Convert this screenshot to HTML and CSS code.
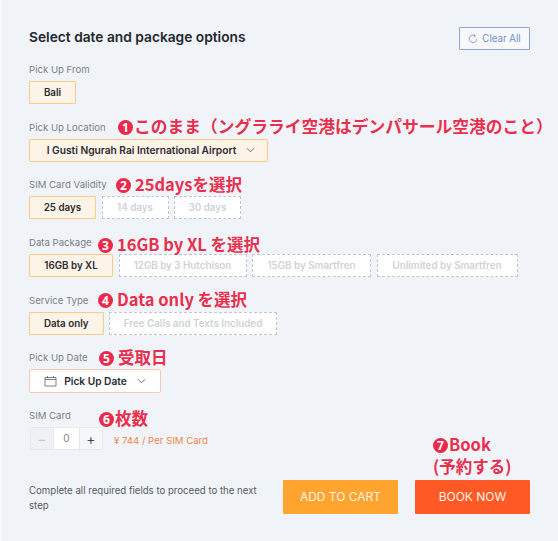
FILE: index.html
```html
<!DOCTYPE html>
<html lang="en">
<head>
<meta charset="utf-8">
<title>Select date and package options</title>
<link rel="stylesheet" href="styles.css">
</head>
<body>
<main class="panel">
  <header class="head">
    <h1 class="title">Select date and package options</h1>
    <button class="clear">
      <svg class="clear-icon" viewBox="0 0 12 12" aria-hidden="true"><path d="M8.6 2.1A4.500 4.500 0 1 0 10.500 6"/><path d="M6.900 0.600 8.900 2.200 7.100 4"/></svg>
      Clear All
    </button>
  </header>

  <section class="group">
    <div class="label">Pick Up From</div>
    <div class="options"><span class="opt on w-bali">Bali</span></div>
  </section>

  <section class="group">
    <div class="label">Pick Up Location
      <span class="note n1"><i class="num">1</i>このまま（ングラライ空港はデンパサール空港のこと）</span>
    </div>
    <div class="options">
      <span class="opt on w-loc">I Gusti Ngurah Rai International Airport
        <svg class="chev" viewBox="0 0 10 6" aria-hidden="true"><path d="M1 1l4 4 4-4"/></svg>
      </span>
    </div>
  </section>

  <section class="group">
    <div class="label">SIM Card Validity
      <span class="note n2"><i class="num">2</i>25daysを選択</span>
    </div>
    <div class="options">
      <span class="opt on w-67">25 days</span>
      <span class="opt off w-67">14 days</span>
      <span class="opt off w-67">30 days</span>
    </div>
  </section>

  <section class="group">
    <div class="label">Data Package
      <span class="note n3"><i class="num">3</i>16GB by XL を選択</span>
    </div>
    <div class="options">
      <span class="opt on w-84">16GB by XL</span>
      <span class="opt off w-128">12GB by 3 Hutchison</span>
      <span class="opt off w-119">15GB by Smartfren</span>
      <span class="opt off w-141">Unlimited by Smartfren</span>
    </div>
  </section>

  <section class="group">
    <div class="label">Service Type
      <span class="note n4"><i class="num">4</i>Data only を選択</span>
    </div>
    <div class="options">
      <span class="opt on w-75">Data only</span>
      <span class="opt off w-168">Free Calls and Texts Included</span>
    </div>
  </section>

  <section class="group">
    <div class="label">Pick Up Date
      <span class="note n5"><i class="num">5</i>受取日</span>
    </div>
    <div class="options">
      <span class="opt date">
        <svg class="cal" viewBox="0 0 13 12" aria-hidden="true"><path d="M1 2.500h11v8.500H1zM1 4.500h11M3.500 1v2M9.500 1v2"/></svg>
        Pick Up Date
        <svg class="chev chev-date" viewBox="0 0 10 6" aria-hidden="true"><path d="M1 1l4 4 4-4"/></svg>
      </span>
    </div>
  </section>

  <section class="group sim">
    <div class="label">SIM Card
      <span class="note n6"><i class="num">6</i>枚数</span>
    </div>
    <div class="stepper-row">
      <div class="stepper">
        <span class="step minus">−</span>
        <span class="count">0</span>
        <span class="step plus">+</span>
      </div>
      <span class="price">¥ 744 / Per SIM Card</span>
    </div>
  </section>

  <footer class="foot">
    <p class="hint">Complete all required fields to proceed to the next step</p>
    <button class="cta cart">ADD TO CART</button>
    <div class="book-wrap">
      <span class="note n7"><i class="num">7</i>Book<br>(予約する)</span>
      <button class="cta book">BOOK NOW</button>
    </div>
  </footer>
</main>
</body>
</html>
```

FILE: styles.css
```css
* { box-sizing: border-box; }

html, body { margin: 0; height: 100%; }

body {
  background: #fff;
  font-family: Inter, "Noto Sans", sans-serif;
  overflow: hidden;
}

.panel {
  width: 557px;
  height: 541px;
  margin-left: 1px;
  padding: 27px 28px 0 28px;
  background: #f0f4f9;
}

.head {
  display: flex;
  justify-content: space-between;
  align-items: flex-start;
  height: 34px;
}

.title {
  margin: 0;
  padding-top: 2px;
  font-size: 13.750px;
  line-height: 17px;
  font-weight: 600;
  color: #23272e;
}

.clear {
  display: flex;
  align-items: center;
  justify-content: center;
  gap: 4px;
  width: 71px;
  height: 23px;
  padding: 0;
  border: 1px solid #8ea6d4;
  border-radius: 1px;
  background: #f6f8fc;
  color: #6f8fcb;
  font: 400 9.700px Inter, sans-serif;
}

.clear-icon {
  width: 10px;
  height: 10px;
  fill: none;
  stroke: #6f8fcb;
  stroke-width: 1;
}

.group { height: 57.67px; position: relative; }

.label {
  position: relative;
  height: 16px;
  margin-bottom: 4px;
  font-size: 9.600px;
  line-height: 18px;
  color: #7a7f87;
}

.options { display: flex; gap: 5.500px; }

.opt {
  display: flex;
  align-items: center;
  justify-content: center;
  height: 23px;
  font-size: 9.800px;
  font-weight: 600;
  white-space: nowrap;
}

.on {
  border: 1px solid #f4cc88;
  border-radius: 1px;
  background: #fdf3e6;
  color: #2a2c31;
}

.off {
  border: 1px dashed #c3c7cd;
  background: #fff;
  color: #cfd2d6;
}

.w-bali { width: 47px; }
.w-loc { width: 239px; gap: 10px; font-size: 10.200px; padding-left: 5px; }
.w-67 { width: 67px; }
.w-84 { width: 84px; }
.w-128 { width: 128px; }
.w-119 { width: 119px; }
.w-141 { width: 141px; }
.w-75 { width: 74.500px; }
.w-168 { width: 168px; }

.chev {
  width: 9px;
  height: 6px;
  fill: none;
  stroke: #5c6066;
  stroke-width: 1;
}

.date {
  width: 132px;
  height: 24px;
  gap: 7px;
  border: 1px solid #f4c9b9;
  border-radius: 2px;
  background: #fff;
  color: #2a2c31;
  font-size: 10.200px;
}

.cal {
  width: 13px;
  height: 12px;
  fill: none;
  stroke: #5c6066;
  stroke-width: 0.8;
}

.chev-date { margin-left: 3px; }

.stepper-row { display: flex; align-items: center; height: 23px; padding-left: 1px; }

.stepper {
  display: flex;
  width: 73px;
  height: 23px;
  border: 1px solid #e6e8ec;
  border-radius: 2px;
  background: #fff;
  font-size: 10px;
}

.step, .count {
  display: flex;
  align-items: center;
  justify-content: center;
}

.step { width: 22px; font-size: 14px; }
.minus { background: #eff1f4; color: #c4c7cc; }
.plus { background: #f6f7f9; color: #44484e; }
.count {
  flex: 1;
  border-left: 1px solid #e6e8ec;
  border-right: 1px solid #e6e8ec;
  color: #80848a;
}

.price {
  margin-left: 11px;
  padding-top: 4px;
  font-size: 9.600px;
  color: #ef8547;
}

.foot {
  display: flex;
  align-items: flex-start;
  padding-top: 15px;
}

.hint {
  width: 254px;
  margin: 0;
  padding: 3px 20px 0 0;
  font-size: 9.650px;
  line-height: 15px;
  color: #55595f;
}

.cta {
  height: 34px;
  width: 115px;
  padding: 0;
  border: 0;
  border-radius: 1px;
  color: #fff3e6;
  font: 400 12px Inter, sans-serif;
}

.cart { background: #ffa42f; }
.book { background: #ff5a26; display: block; }
.book-wrap { position: relative; margin-left: 17px; }

.note {
  position: absolute;
  white-space: nowrap;
  font-family: "Noto Sans CJK JP", sans-serif;
  font-size: 16.500px;
  line-height: 22px;
  font-weight: 700;
  color: #e8304e;
}

.num {
  display: inline-flex;
  align-items: center;
  justify-content: center;
  width: 15px;
  height: 15px;
  margin-right: 4px;
  border-radius: 50%;
  background: #ea2a4a;
  color: #fff;
  font-family: "Noto Sans", sans-serif;
  font-style: normal;
  font-size: 12px;
  font-weight: 700;
  line-height: 15px;
  vertical-align: 1px;
}

.n1 { left: 89px; top: -4px; font-size: 16.750px; }
.n1 .num { margin-right: 1px; }
.n2 { left: 87px; top: -3px; }
.n3 { left: 69px; top: -1px; }
.n4 { left: 69px; top: -4px; }
.n5 { left: 70px; top: -3px; }
.n6 { left: 70px; top: 0; }
.n6 .num { margin-right: 1px; }
.n7 { left: 18px; top: -47px; }
.n7 .num { margin-right: 1px; }
```
